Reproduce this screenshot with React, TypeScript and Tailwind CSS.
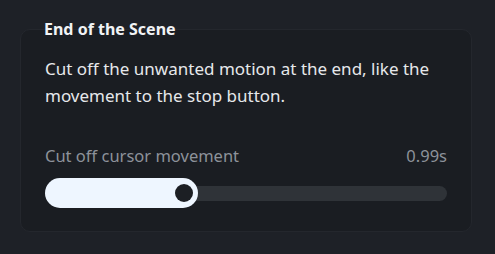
export default function App() {
  const value = 0.99;
  const pct = 38;

  return (
    <div className="h-[254px] w-[495px] bg-[#1e2127] px-5 pt-[18px] font-['Noto_Sans',sans-serif]">
      <h2 className="relative z-10 pl-6 text-[16px] font-bold leading-[22px] text-[#f1f3f5]">End of the Scene</h2>

      <div className="-mt-[11px] h-[203px] w-[452px] rounded-[10px] border border-[#24272d] bg-[#1a1d22] px-6 pt-[25px]">
        <p className="text-[17px] leading-[27px] text-[#e6e8eb]">
          Cut off the unwanted motion at the end, like the movement to the stop button.
        </p>

        <div className="mt-[36px] flex items-center justify-between text-[16.5px] leading-[22px] text-[#8d929a]">
          <span>Cut off cursor movement</span>
          <span>{value}s</span>
        </div>

        <div className="relative mt-[11px] flex h-[30px] items-center">
          <div className="h-[15px] w-full rounded-full bg-[#2f3338]" />
          <div
            className="absolute left-0 top-0 flex h-[30px] items-center justify-end rounded-full bg-[#eef6ff] pr-[5px]"
            style={{ width: `${pct}%` }}
          >
            <div className="h-[18px] w-[18px] rounded-full bg-[#1c1f24]" />
          </div>
        </div>
      </div>
    </div>
  );
}
